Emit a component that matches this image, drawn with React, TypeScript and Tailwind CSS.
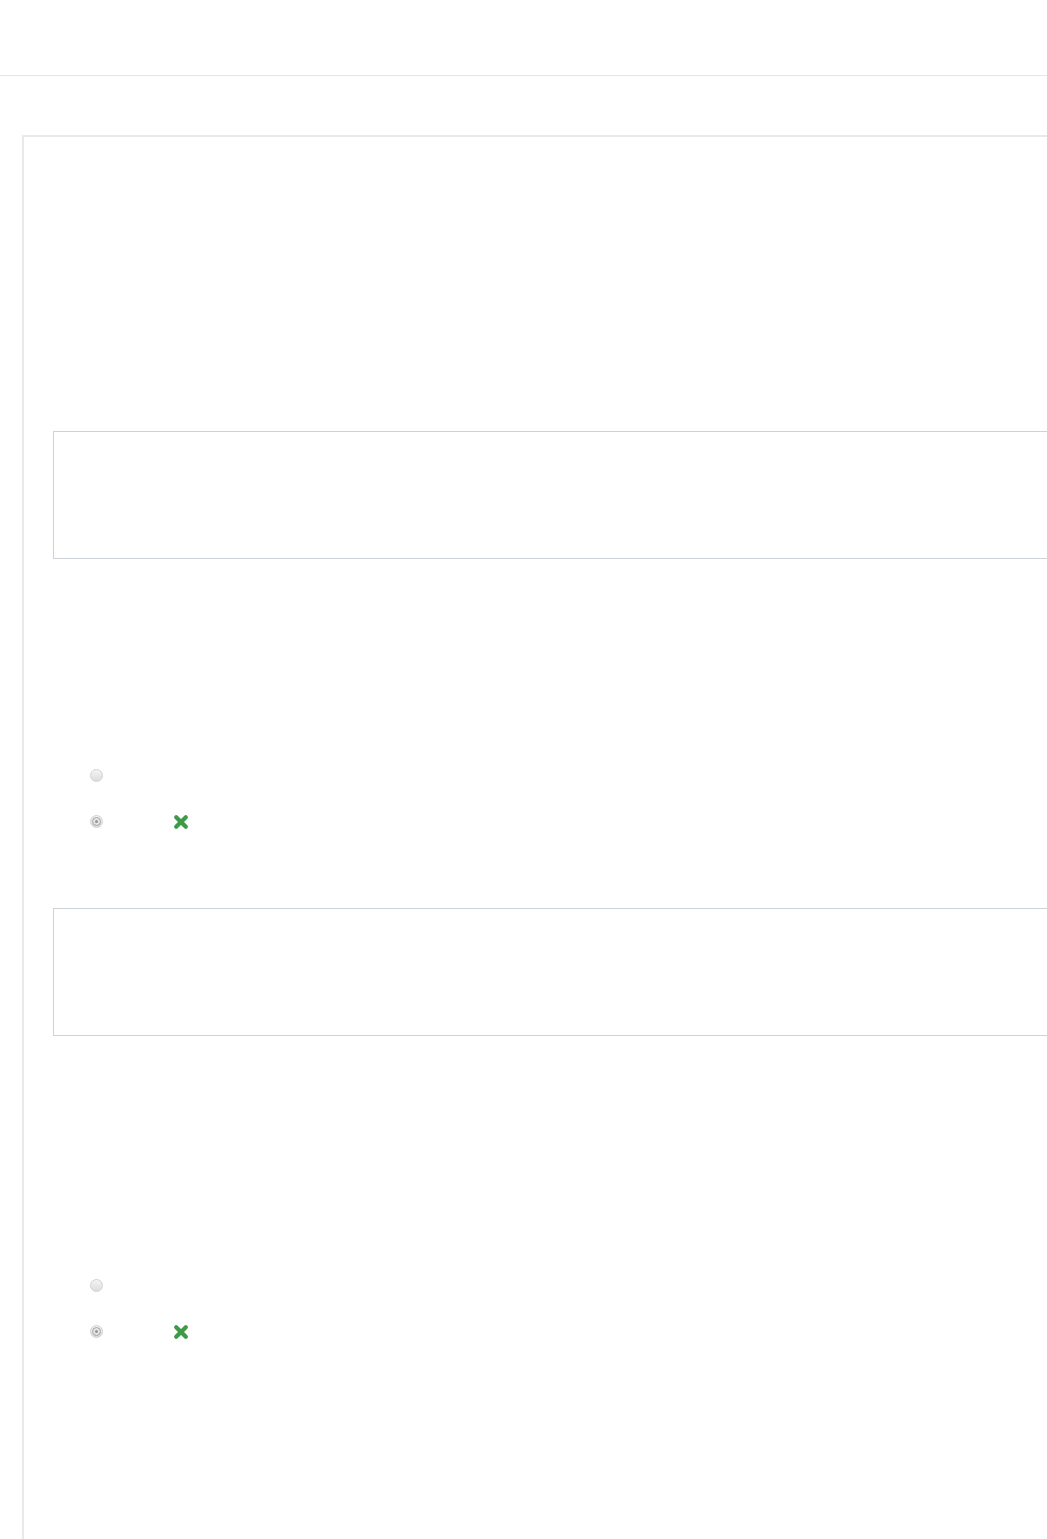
function Radio({ checked }: { checked?: boolean }) {
  return (
    <span className="flex h-[13px] w-[13px] items-center justify-center rounded-full border border-[#d2d2d2] bg-gradient-to-b from-[#f4f4f4] to-[#dcdcdc]">
      {checked && (
        <span className="flex h-[9px] w-[9px] items-center justify-center rounded-full border border-[#a4a4a4] bg-[#e4e4e4]">
          <span className="h-[3px] w-[3px] rounded-full bg-[#969696]" />
        </span>
      )}
    </span>
  );
}

function WrongMark() {
  return (
    <svg viewBox="0 0 16 16" className="h-4 w-4" aria-hidden="true">
      <path d="M3.2 3.2 L12.8 12.8 M12.8 3.2 L3.2 12.8" stroke="#3d9b48" strokeWidth="4.2" strokeLinecap="round" fill="none" />
    </svg>
  );
}

function AnswerBox() {
  return <div className="h-[128px] w-[1100px] border border-[#cdd1d8] bg-white" />;
}

function Choices() {
  return (
    <div className="ml-[37px] flex flex-col gap-[33px]">
      <div className="flex h-[13px] items-center">
        <Radio />
      </div>
      <div className="flex h-[13px] items-center">
        <Radio checked />
        <span className="ml-[70px]">
          <WrongMark />
        </span>
      </div>
    </div>
  );
}

export default function App() {
  return (
    <div className="min-h-[1539px] w-full overflow-hidden bg-white font-['Liberation_Sans',Arial,sans-serif]">
      <header className="h-[76px] border-b border-[#e6e6e6]" />
      <main className="pl-[22px] pt-[59px]">
        <section className="h-[1420px] w-[1100px] border-l-2 border-t-2 border-[#e9e9e9] pl-[29px] pt-[294px]">
          <AnswerBox />
          <div className="mt-[210px]">
            <Choices />
          </div>
          <div className="mt-[80px]">
            <AnswerBox />
          </div>
          <div className="mt-[243px]">
            <Choices />
          </div>
        </section>
      </main>
    </div>
  );
}
